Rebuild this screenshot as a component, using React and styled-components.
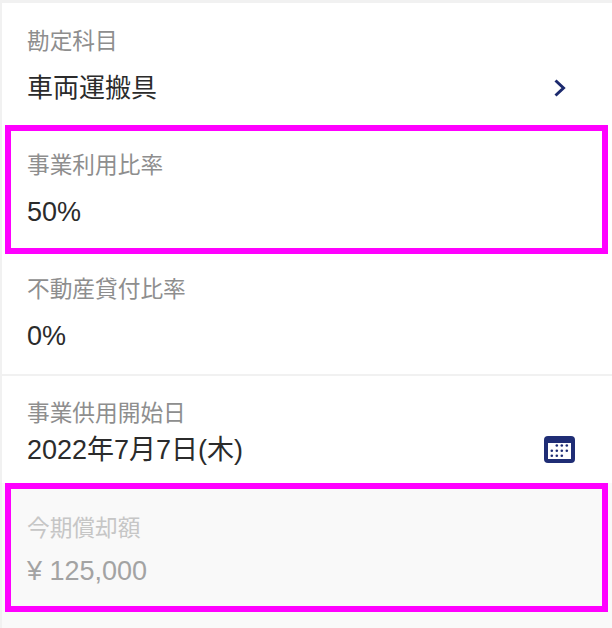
import React from "react";
import styled, { createGlobalStyle } from "styled-components";

const GlobalStyle = createGlobalStyle`
  html, body {
    margin: 0;
    padding: 0;
    background: #ffffff;
  }
`;

const Page = styled.div`
  width: 612px;
  height: 628px;
  overflow: hidden;
  box-sizing: border-box;
  border-top: 3px solid #f1f1f1;
  border-left: 2px solid #f1f1f1;
  background: #f9f9f9;
  font-family: "Liberation Sans", "Noto Sans CJK JP", sans-serif;
`;

const Row = styled.div`
  position: relative;
  box-sizing: border-box;
  height: ${(p) => p.$height}px;
  padding: ${(p) => p.$pad}px 37px 0 25px;
  background: ${(p) => (p.$disabled ? "#f9f9f9" : "#ffffff")};
  border-bottom: ${(p) => (p.$line ? "2px solid #f1f1f1" : "none")};

  &::after {
    content: ${(p) => (p.$marked ? '""' : "none")};
    position: absolute;
    top: 0;
    bottom: 0;
    left: 3px;
    right: 4px;
    border: 6px solid #ff00ff;
  }
`;

const Label = styled.div`
  font-family: "Noto Sans CJK JP", sans-serif;
  font-size: 22.7px;
  line-height: 30px;
  color: ${(p) => (p.$disabled ? "#c6c6c6" : "#8e8e8e")};
`;

const ValueLine = styled.div`
  display: flex;
  align-items: center;
  justify-content: space-between;
  margin-top: ${(p) => p.$gap}px;
  height: 34px;
`;

const Value = styled.span`
  font-size: ${(p) => (p.$cjk ? 26 : 27)}px;
  line-height: 34px;
  color: ${(p) => (p.$disabled ? "#a3a3a3" : "#2b2b2b")};
`;

const IconSlot = styled.span`
  display: flex;
  flex: none;
  justify-content: center;
  width: 31px;
`;

const Chevron = () => (
  <svg width="14" height="20" viewBox="0 0 14 20">
    <path d="M2.5 2.5 L10.5 10 L2.5 17.5" fill="none" stroke="#1c2a6e" strokeWidth="3" />
  </svg>
);

const dots = [
  [12.3, 9.5], [17.3, 9.5], [22.3, 9.5],
  [7.3, 14.7], [12.3, 14.7], [17.3, 14.7], [22.3, 14.7],
  [7.3, 19.7], [12.3, 19.7], [17.3, 19.7],
];

const CalendarIcon = () => (
  <svg width="31" height="29" viewBox="0 0 31 29">
    <rect x="0" y="0" width="31" height="27" rx="4" fill="#1f2d75" />
    <rect x="4" y="7" width="23" height="16" fill="#ffffff" />
    {dots.map(([x, y]) => (
      <circle key={`${x}-${y}`} cx={x + 0.5} cy={y} r="1.3" fill="#1f2d75" />
    ))}
  </svg>
);

const rows = [
  { label: "勘定科目", value: "車両運搬具", height: 122, pad: 22, gap: 16, icon: <Chevron />, cjk: true },
  { label: "事業利用比率", value: "50%", height: 129, pad: 24, gap: 16, marked: true },
  { label: "不動産貸付比率", value: "0%", height: 122, pad: 19, gap: 16, line: true },
  { label: "事業供用開始日", value: "2022年7月7日(木)", height: 107, pad: 21, gap: 6, icon: <CalendarIcon /> },
  { label: "今期償却額", value: "¥ 125,000", height: 129, pad: 29, gap: 12, marked: true, disabled: true },
];

const App = () => (
  <Page>
    <GlobalStyle />
    {rows.map((r) => (
      <Row key={r.label} $height={r.height} $pad={r.pad} $marked={r.marked} $disabled={r.disabled} $line={r.line}>
        <Label $disabled={r.disabled}>{r.label}</Label>
        <ValueLine $gap={r.gap}>
          <Value $disabled={r.disabled} $cjk={r.cjk}>{r.value}</Value>
          {r.icon && <IconSlot>{r.icon}</IconSlot>}
        </ValueLine>
      </Row>
    ))}
  </Page>
);

export default App;
